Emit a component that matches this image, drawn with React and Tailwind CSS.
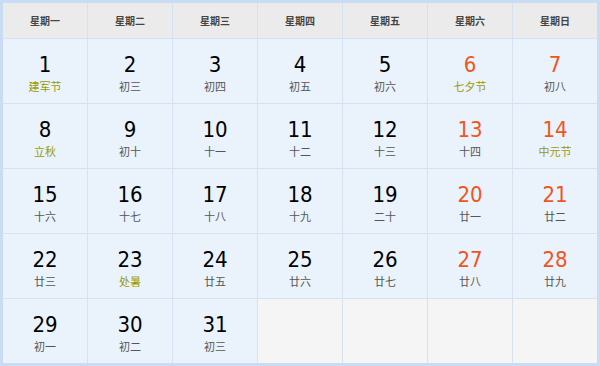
const weekdays = ['星期一', '星期二', '星期三', '星期四', '星期五', '星期六', '星期日'];

// [day, lunar text, is festival / solar term]
const days = [
  [1, '建军节', true], [2, '初三'], [3, '初四'], [4, '初五'], [5, '初六'], [6, '七夕节', true], [7, '初八'],
  [8, '立秋', true], [9, '初十'], [10, '十一'], [11, '十二'], [12, '十三'], [13, '十四'], [14, '中元节', true],
  [15, '十六'], [16, '十七'], [17, '十八'], [18, '十九'], [19, '二十'], [20, '廿一'], [21, '廿二'],
  [22, '廿三'], [23, '处暑', true], [24, '廿五'], [25, '廿六'], [26, '廿七'], [27, '廿八'], [28, '廿九'],
  [29, '初一'], [30, '初二'], [31, '初三'],
];

const cjk = "font-['Noto_Sans_CJK_SC',sans-serif]";

function DayCell({ day, lunar, festival, weekend }) {
  return (
    <div className="flex flex-col items-center bg-[#eaf3fb] pt-[13px]">
      <span
        className={`font-['DejaVu_Sans_Condensed',sans-serif] text-[22px] leading-[26px] ${
          weekend ? 'text-[#f2541b]' : 'text-black'
        }`}
      >
        {day}
      </span>
      <span
        className={`${cjk} text-[11px] leading-[14px] mt-[1px] ${
          festival ? 'text-[#9a9a00]' : 'text-[#555]'
        }`}
      >
        {lunar}
      </span>
    </div>
  );
}

export default function App() {
  const empty = 35 - days.length;
  return (
    <div className="w-[600px] h-[366px] border-[3px] border-[#c8dcf3] bg-[#d6e2f1] grid grid-cols-[repeat(7,84px)] grid-rows-[35px_repeat(5,64px)] gap-px">
      {weekdays.map(w => (
        <div
          key={w}
          className={`flex items-center justify-center bg-[#ebebeb] ${cjk} text-[10px] font-bold text-[#444]`}
        >
          {w}
        </div>
      ))}
      {days.map(([d, lunar, fest], i) => (
        <DayCell key={d} day={d} lunar={lunar} festival={fest} weekend={i % 7 >= 5} />
      ))}
      {Array.from({ length: empty }).map((_, i) => (
        <div key={'e' + i} className="bg-[#f5f5f5]" />
      ))}
    </div>
  );
}
